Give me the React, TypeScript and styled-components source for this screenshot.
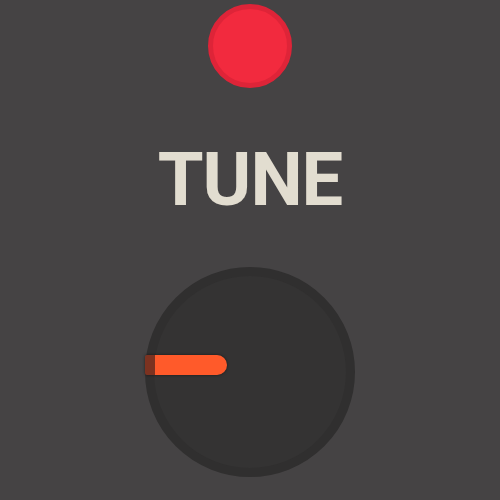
import styled, { createGlobalStyle } from "styled-components";

const Global = createGlobalStyle`
  html, body {
    margin: 0;
    padding: 0;
    background: #454344;
  }
`;

const Panel = styled.div`
  width: 500px;
  height: 500px;
  display: flex;
  flex-direction: column;
  align-items: center;
  background: #454344;
  font-family: Roboto, "Liberation Sans", sans-serif;
`;

const Led = styled.div<{ $on: boolean }>`
  width: 84px;
  height: 84px;
  margin-top: 4px;
  border-radius: 50%;
  box-sizing: border-box;
  border: 5px solid #de2438;
  background: ${(p) => (p.$on ? "#f22a3e" : "#5a2a2e")};
`;

const Label = styled.div`
  margin-top: 55px;
  font-size: 74px;
  line-height: 74px;
  font-weight: 700;
  color: #e2ddd0;
  letter-spacing: -1px;
`;

const Knob = styled.div`
  margin-top: 50px;
  width: 210px;
  height: 210px;
  border-radius: 50%;
  box-sizing: border-box;
  border: 9px solid #302f2f;
  background: #343333;
  position: relative;
`;

const Pointer = styled.div<{ $angle: number }>`
  position: absolute;
  left: -9px;
  top: 79px;
  width: 82px;
  height: 20px;
  border-radius: 2px 10px 10px 2px;
  background: linear-gradient(to right, #7c3220 10px, #ff5a2a 10px);
  box-shadow: 0 0 3px rgba(0, 0, 0, 0.55);
  transform-origin: 105px 10px;
  transform: rotate(${(p) => p.$angle}deg);
`;

export default function App() {
  return (
    <>
      <Global />
      <Panel>
        <Led $on />
        <Label>TUNE</Label>
        <Knob>
          <Pointer $angle={0} />
        </Knob>
      </Panel>
    </>
  );
}
